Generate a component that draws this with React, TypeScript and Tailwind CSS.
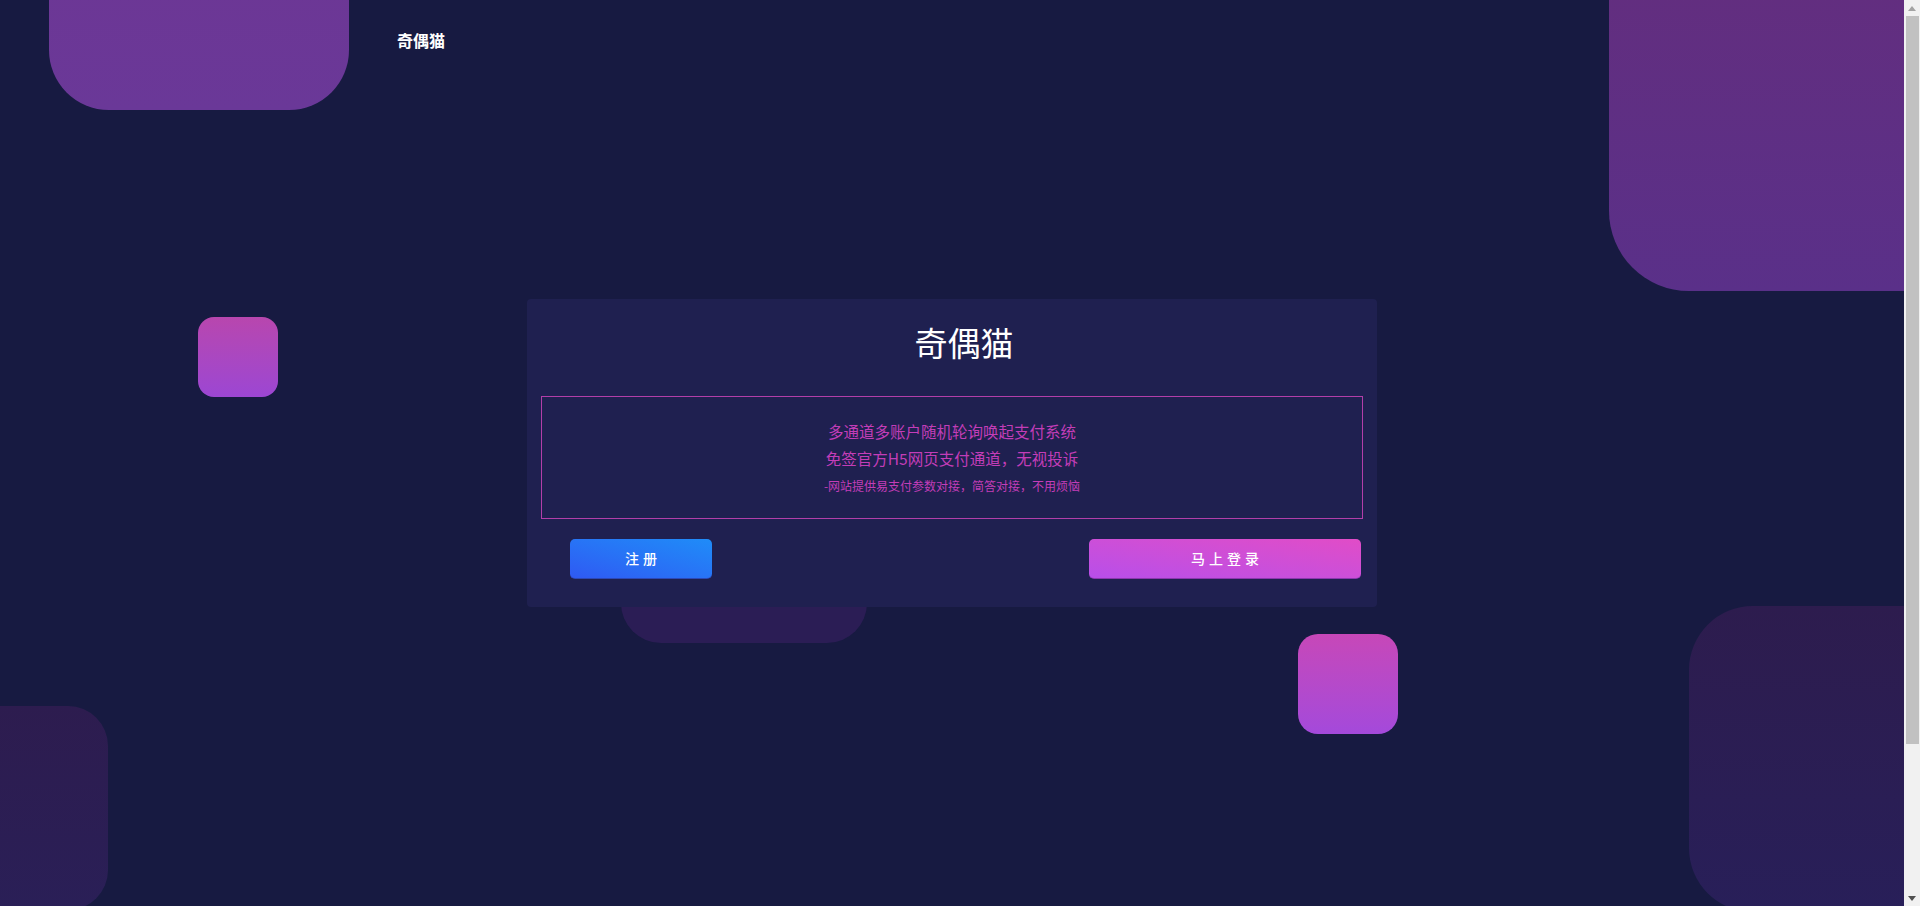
import React from "react";

const FONT = { fontFamily: '"Noto Sans CJK SC", "Noto Sans", sans-serif' };

function Scrollbar() {
  return (
    <div className="flex h-full w-[16px] shrink-0 flex-col bg-[#f1f1f1]">
      <div className="flex h-[16px] items-center justify-center">
        <svg width="8" height="5" viewBox="0 0 8 5">
          <path d="M0 5 L4 0 L8 5 Z" fill="#a3a3a3" />
        </svg>
      </div>
      <div className="ml-[2px] mr-[1px] h-[728px] bg-[#c1c1c1]" />
      <div className="flex-1" />
      <div className="flex h-[16px] items-center justify-center">
        <svg width="8" height="5" viewBox="0 0 8 5">
          <path d="M0 0 L8 0 L4 5 Z" fill="#505050" />
        </svg>
      </div>
    </div>
  );
}

export default function App() {
  return (
    <div className="flex h-[906px] w-full overflow-hidden bg-[#171a41]" style={FONT}>
      <div className="relative h-full flex-1 overflow-hidden">
        {/* background shapes */}
        <div className="absolute left-[49px] top-[-190px] h-[300px] w-[300px] rounded-[60px] bg-gradient-to-b from-[#6f3591] to-[#6a3898]" />
        <div className="absolute left-[1609px] top-[-110px] h-[401px] w-[400px] rounded-[80px] bg-gradient-to-b from-[#652d7c] to-[#5a3089]" />
        <div className="absolute left-[198px] top-[317px] h-[80px] w-[80px] rounded-[16px] bg-gradient-to-b from-[#b846ae] to-[#9c46d3]" />
        <div className="absolute left-[621px] top-[470px] h-[173px] w-[246px] rounded-[40px] bg-[#2b1d55]" />
        <div className="absolute left-[1298px] top-[634px] h-[100px] w-[100px] rounded-[20px] bg-gradient-to-b from-[#c747b8] to-[#a449db]" />
        <div className="absolute left-[-100px] top-[706px] h-[204px] w-[208px] rounded-[40px] bg-gradient-to-b from-[#2d1c4f] to-[#2a1f57]" />
        <div className="absolute left-[1689px] top-[606px] h-[306px] w-[320px] rounded-[64px] bg-gradient-to-b from-[#2d1c4e] to-[#281f59]" />

        <div className="relative">
          {/* header */}
          <div className="mx-auto w-[1140px] px-[15px] pt-[28px]">
            <div className="text-[16px] font-bold leading-[24px] text-white">奇偶猫</div>
          </div>

          {/* card */}
          <div className="mx-auto mt-[247px] w-[850px] rounded-[4px] bg-[#1f2050] px-[14px] pb-[28px] pt-[18px]">
            <h1 className="pl-[24px] text-center text-[33px] font-normal leading-[50px] text-white">奇偶猫</h1>
            <div className="mt-[29px] border border-[#b23ea9] pb-[18px] pt-[21px] text-center text-[#c33db8]">
              <p className="text-[15.5px] leading-[27px]">多通道多账户随机轮询唤起支付系统</p>
              <p className="text-[15.5px] leading-[27px]">免签官方H5网页支付通道，无视投诉</p>
              <p className="text-[12px] leading-[28px]">-网站提供易支付参数对接，简答对接，不用烦恼</p>
            </div>
            <div className="mt-[20px] flex items-center justify-between pl-[29px] pr-[2px]">
              <button className="h-[40px] w-[142px] rounded-[5px] border-b border-[#2c48b6] bg-gradient-to-tr from-[#2f59f3] to-[#1f8cf8] pl-[4px] text-[14px] font-medium tracking-[4px] text-white">
                注册
              </button>
              <button className="h-[40px] w-[272px] rounded-[5px] border-b border-[#8c37ad] bg-gradient-to-tr from-[#b84ee9] to-[#e14cc7] pl-[4px] text-[14px] font-medium tracking-[4px] text-white">
                马上登录
              </button>
            </div>
          </div>
        </div>
      </div>
      <Scrollbar />
    </div>
  );
}
